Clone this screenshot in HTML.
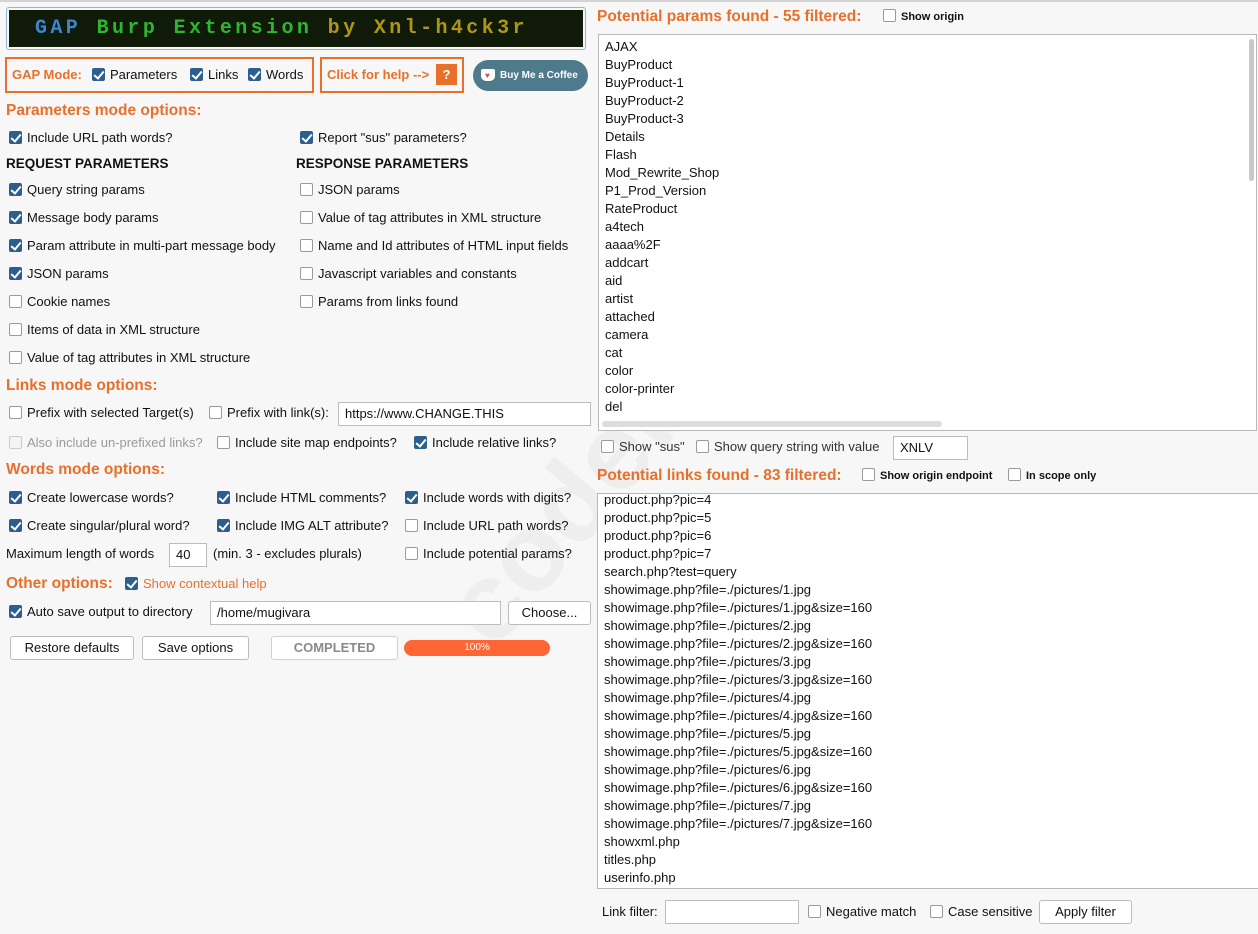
<!DOCTYPE html>
<html><head><meta charset="utf-8"><style>
*{box-sizing:border-box}
body{margin:0;width:1258px;height:934px;background:#f7f7f7;font-family:"Liberation Sans",sans-serif;font-size:13px;color:#111;position:relative;overflow:hidden}
.r{position:absolute;height:18px;line-height:18px;white-space:nowrap}
.cb{display:inline-block;width:13px;height:13px;border:1px solid #9a9a9a;border-radius:2px;background:#fff;vertical-align:-2px;margin-right:5px;position:relative}
.cb.on{background:#2c5f8f;border-color:#2c5f8f}
.cb.on::after{content:"";position:absolute;left:3px;top:0px;width:4px;height:8px;border:solid #fff;border-width:0 2px 2px 0;transform:rotate(40deg)}
.cb.dis{border-color:#ccc;background:#f4f4f4}
.h{position:absolute;color:#e8702a;font-weight:bold;font-size:15.5px;white-space:nowrap;line-height:20px}
.b{font-weight:bold}
.in{position:absolute;background:#fff;border:1px solid #bdbdbd;padding-left:6px;line-height:21px;white-space:nowrap}
.btn{position:absolute;background:#fff;border:1px solid #bdbdbd;border-radius:3px;text-align:center;line-height:21px}
.list{position:absolute;background:#fff;border:1px solid #b8b8b8;overflow:hidden}
.list div{height:18px;line-height:18px;padding-left:6px;white-space:nowrap}
.sm{font-size:11px;font-weight:bold}
</style></head><body>
<div style="position:absolute;left:0;top:0;width:1258px;height:2px;background:#d4d4d4"></div>
<div style="position:absolute;left:380px;top:380px;font-size:110px;font-weight:bold;color:rgba(0,0,0,0.035);transform:rotate(-50deg);transform-origin:center;white-space:nowrap;width:480px;text-align:center">codeby.net</div>

<div style="position:absolute;left:6px;top:7px;width:580px;height:43px;border:1px solid #8fb6d8;border-radius:3px;padding:2px;background:#f7f7f7">
<div style="width:100%;height:100%;background:#0f1a08;font-family:'Liberation Mono',monospace;font-size:20px;line-height:38px;padding-left:26px;letter-spacing:3.4px;font-weight:bold;white-space:nowrap"><span style="color:#3a86d0">GAP</span> <span style="color:#2fb52f">Burp Extension</span> <span style="color:#b09618">by Xnl-h4ck3r</span></div></div>

<div style="position:absolute;left:5px;top:57px;width:309px;height:36px;border:2px solid #e8702a"></div>
<div class="r b" style="left:12px;top:66px;color:#e8702a;font-size:13px">GAP Mode:</div>
<div class="r" style="left:92px;top:66px"><span class="cb on"></span>Parameters</div>
<div class="r" style="left:190px;top:66px"><span class="cb on"></span>Links</div>
<div class="r" style="left:248px;top:66px"><span class="cb on"></span>Words</div>
<div style="position:absolute;left:320px;top:57px;width:144px;height:36px;border:2px solid #e8702a"></div>
<div class="r b" style="left:327px;top:66px;color:#e8702a;font-size:13px">Click for help --&gt;</div>
<div style="position:absolute;left:436px;top:64px;width:21px;height:21px;background:#e8702a;color:#fff;font-weight:bold;text-align:center;line-height:21px">?</div>
<div style="position:absolute;left:473px;top:60px;width:115px;height:31px;background:#4f7a8c;border-radius:16px;color:#fff;font-size:10px;font-weight:bold;line-height:31px;padding-left:27px;white-space:nowrap">Buy Me a Coffee
<span style="position:absolute;left:8px;top:9px;width:14px;height:12px;background:#fff;border-radius:2px 2px 5px 5px"></span><span style="position:absolute;left:12px;top:12px;color:#e8453c;font-size:8px;line-height:8px">♥</span></div>

<div class="h" style="left:6px;top:101px">Parameters mode options:</div>
<div class="r" style="left:9px;top:129px"><span class="cb on"></span>Include URL path words?</div>
<div class="r" style="left:300px;top:129px"><span class="cb on"></span>Report "sus" parameters?</div>
<div class="r b" style="left:6px;top:155px;font-size:13.5px">REQUEST PARAMETERS</div>
<div class="r b" style="left:296px;top:155px;font-size:13.5px">RESPONSE PARAMETERS</div>
<div class="r" style="left:9px;top:181px"><span class="cb on"></span>Query string params</div>
<div class="r" style="left:9px;top:209px"><span class="cb on"></span>Message body params</div>
<div class="r" style="left:9px;top:237px"><span class="cb on"></span>Param attribute in multi-part message body</div>
<div class="r" style="left:9px;top:265px"><span class="cb on"></span>JSON params</div>
<div class="r" style="left:9px;top:293px"><span class="cb"></span>Cookie names</div>
<div class="r" style="left:9px;top:321px"><span class="cb"></span>Items of data in XML structure</div>
<div class="r" style="left:9px;top:349px"><span class="cb"></span>Value of tag attributes in XML structure</div>
<div class="r" style="left:300px;top:181px"><span class="cb"></span>JSON params</div>
<div class="r" style="left:300px;top:209px"><span class="cb"></span>Value of tag attributes in XML structure</div>
<div class="r" style="left:300px;top:237px"><span class="cb"></span>Name and Id attributes of HTML input fields</div>
<div class="r" style="left:300px;top:265px"><span class="cb"></span>Javascript variables and constants</div>
<div class="r" style="left:300px;top:293px"><span class="cb"></span>Params from links found</div>

<div class="h" style="left:6px;top:376px">Links mode options:</div>
<div class="r" style="left:9px;top:404px"><span class="cb"></span>Prefix with selected Target(s)</div>
<div class="r" style="left:209px;top:404px"><span class="cb"></span>Prefix with link(s):</div>
<div class="in" style="left:338px;top:402px;width:253px;height:24px">https://www.CHANGE.THIS</div>
<div class="r" style="left:9px;top:434px;color:#9a9a9a"><span class="cb dis"></span>Also include un-prefixed links?</div>
<div class="r" style="left:217px;top:434px"><span class="cb"></span>Include site map endpoints?</div>
<div class="r" style="left:414px;top:434px"><span class="cb on"></span>Include relative links?</div>

<div class="h" style="left:6px;top:460px">Words mode options:</div>
<div class="r" style="left:9px;top:489px"><span class="cb on"></span>Create lowercase words?</div>
<div class="r" style="left:217px;top:489px"><span class="cb on"></span>Include HTML comments?</div>
<div class="r" style="left:405px;top:489px"><span class="cb on"></span>Include words with digits?</div>
<div class="r" style="left:9px;top:517px"><span class="cb on"></span>Create singular/plural word?</div>
<div class="r" style="left:217px;top:517px"><span class="cb on"></span>Include IMG ALT attribute?</div>
<div class="r" style="left:405px;top:517px"><span class="cb"></span>Include URL path words?</div>
<div class="r" style="left:6px;top:545px">Maximum length of words</div>
<div class="in" style="left:169px;top:543px;width:38px;height:24px">40</div>
<div class="r" style="left:213px;top:545px">(min. 3 - excludes plurals)</div>
<div class="r" style="left:405px;top:545px"><span class="cb"></span>Include potential params?</div>

<div class="h" style="left:6px;top:574px">Other options:</div>
<div class="r" style="left:125px;top:575px;color:#e8702a"><span class="cb on"></span>Show contextual help</div>
<div class="r" style="left:9px;top:603px"><span class="cb on"></span>Auto save output to directory</div>
<div class="in" style="left:210px;top:601px;width:291px;height:24px">/home/mugivara</div>
<div class="btn" style="left:508px;top:601px;width:83px;height:24px">Choose...</div>
<div class="btn" style="left:10px;top:636px;width:124px;height:24px">Restore defaults</div>
<div class="btn" style="left:142px;top:636px;width:107px;height:24px">Save options</div>
<div class="btn" style="left:271px;top:636px;width:127px;height:24px;color:#8a8a8a;font-weight:bold;border-color:#d0d0d0">COMPLETED</div>
<div style="position:absolute;left:404px;top:640px;width:146px;height:16px;background:#ff6633;border-radius:8px;color:#fff;font-size:10px;text-align:center;line-height:16px">100%</div>

<div class="h" style="left:597px;top:7px">Potential params found - 55 filtered:</div>
<div class="r sm" style="left:883px;top:8px"><span class="cb"></span>Show origin</div>
<div class="list" style="left:598px;top:34px;width:659px;height:397px;padding-top:3px">
<div>AJAX</div><div>BuyProduct</div><div>BuyProduct-1</div><div>BuyProduct-2</div><div>BuyProduct-3</div><div>Details</div><div>Flash</div><div>Mod_Rewrite_Shop</div><div>P1_Prod_Version</div><div>RateProduct</div><div>a4tech</div><div>aaaa%2F</div><div>addcart</div><div>aid</div><div>artist</div><div>attached</div><div>camera</div><div>cat</div><div>color</div><div>color-printer</div><div>del</div>
<span style="position:absolute;left:650px;top:4px;width:5px;height:142px;background:#c8c8c8;border-radius:3px"></span>
<span style="position:absolute;left:3px;top:386px;width:340px;height:6px;background:#ddd;border-radius:3px"></span>
</div>
<div class="r" style="left:601px;top:438px;color:#333"><span class="cb"></span>Show "sus"</div>
<div class="r" style="left:696px;top:438px;color:#333"><span class="cb"></span>Show query string with value</div>
<div class="in" style="left:893px;top:436px;width:75px;height:24px">XNLV</div>
<div class="h" style="left:597px;top:466px">Potential links found - 83 filtered:</div>
<div class="r sm" style="left:862px;top:467px"><span class="cb"></span>Show origin endpoint</div>
<div class="r sm" style="left:1008px;top:467px"><span class="cb"></span>In scope only</div>
<div class="list" style="left:597px;top:493px;width:662px;height:396px">
<div style="margin-top:-3px">product.php?pic=4</div><div>product.php?pic=5</div><div>product.php?pic=6</div><div>product.php?pic=7</div><div>search.php?test=query</div><div>showimage.php?file=./pictures/1.jpg</div><div>showimage.php?file=./pictures/1.jpg&amp;size=160</div><div>showimage.php?file=./pictures/2.jpg</div><div>showimage.php?file=./pictures/2.jpg&amp;size=160</div><div>showimage.php?file=./pictures/3.jpg</div><div>showimage.php?file=./pictures/3.jpg&amp;size=160</div><div>showimage.php?file=./pictures/4.jpg</div><div>showimage.php?file=./pictures/4.jpg&amp;size=160</div><div>showimage.php?file=./pictures/5.jpg</div><div>showimage.php?file=./pictures/5.jpg&amp;size=160</div><div>showimage.php?file=./pictures/6.jpg</div><div>showimage.php?file=./pictures/6.jpg&amp;size=160</div><div>showimage.php?file=./pictures/7.jpg</div><div>showimage.php?file=./pictures/7.jpg&amp;size=160</div><div>showxml.php</div><div>titles.php</div><div>userinfo.php</div>
</div>
<div class="r" style="left:602px;top:903px">Link filter:</div>
<div class="in" style="left:665px;top:900px;width:134px;height:24px"></div>
<div class="r" style="left:808px;top:903px"><span class="cb"></span>Negative match</div>
<div class="r" style="left:930px;top:903px"><span class="cb"></span>Case sensitive</div>
<div class="btn" style="left:1039px;top:900px;width:93px;height:24px">Apply filter</div>
</body></html>
